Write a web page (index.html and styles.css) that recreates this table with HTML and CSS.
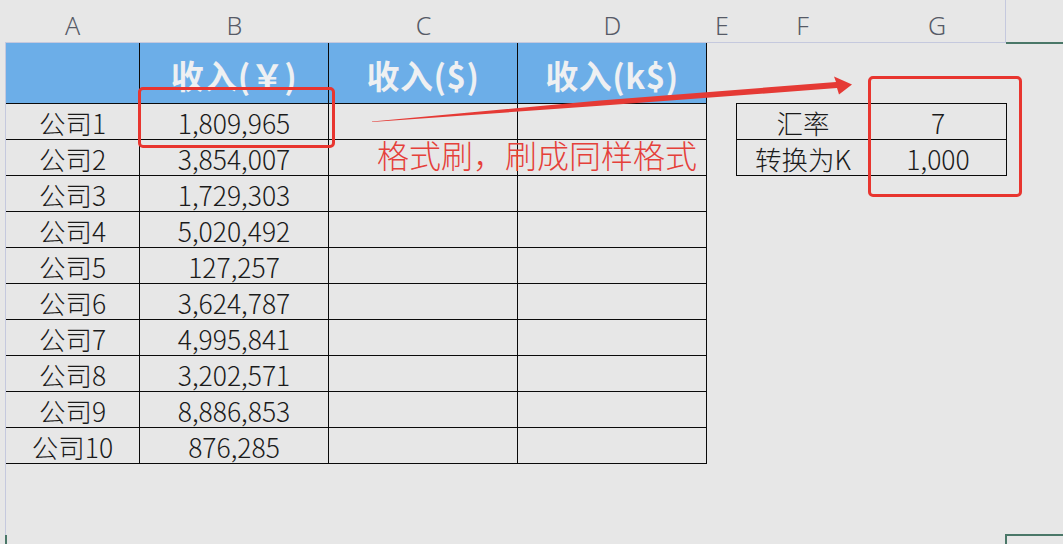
FILE: index.html
```html
<!DOCTYPE html>
<html lang="zh">
<head>
<meta charset="utf-8">
<title>收入表</title>
<link rel="stylesheet" href="styles.css">
</head>
<body>
<div class="sheet">
  <div class="letters">
    <div class="pad"></div>
    <div class="cols">
      <div class="lt w-a">A</div>
      <div class="lt w-b">B</div>
      <div class="lt w-b">C</div>
      <div class="lt w-b">D</div>
      <div class="lt w-e">E</div>
      <div class="lt w-f">F</div>
      <div class="lt w-g">G</div>
    </div>
    <div class="rest"></div>
  </div>
  <div class="area">
    <div class="main">
      <div class="c hd"></div>
      <div class="c hd">收入(￥)</div>
      <div class="c hd">收入($)</div>
      <div class="c hd">收入(k$)</div>

      <div class="c">公司1</div><div class="c">1,809,965</div><div class="c"></div><div class="c"></div>
      <div class="c">公司2</div><div class="c">3,854,007</div><div class="c"></div><div class="c"></div>
      <div class="c">公司3</div><div class="c">1,729,303</div><div class="c"></div><div class="c"></div>
      <div class="c">公司4</div><div class="c">5,020,492</div><div class="c"></div><div class="c"></div>
      <div class="c">公司5</div><div class="c">127,257</div><div class="c"></div><div class="c"></div>
      <div class="c">公司6</div><div class="c">3,624,787</div><div class="c"></div><div class="c"></div>
      <div class="c">公司7</div><div class="c">4,995,841</div><div class="c"></div><div class="c"></div>
      <div class="c">公司8</div><div class="c">3,202,571</div><div class="c"></div><div class="c"></div>
      <div class="c">公司9</div><div class="c">8,886,853</div><div class="c"></div><div class="c"></div>
      <div class="c">公司10</div><div class="c">876,285</div><div class="c"></div><div class="c"></div>
    </div>
    <div class="side">
      <div class="c">汇率</div><div class="c">7</div>
      <div class="c">转换为K</div><div class="c">1,000</div>
    </div>
  </div>

  <div class="box box1"></div>
  <div class="box box2"></div>
  <div class="note">格式刷，刷成同样格式</div>
  <svg class="arrow" width="1063" height="544" viewBox="0 0 1063 544">
    <polygon fill="#e53a35" points="372,121.4 600,100.6 836,82 834,76.5 852,84.5 839,94.5 837,88 600,105.8 372,121.9"/>
  </svg>
  <div class="mark mark-br"></div>
  <div class="mark mark-bl"></div>
</div>
</body>
</html>
```

FILE: styles.css
```css
html, body {
  margin: 0;
  padding: 0;
  background: #e7e7e7;
}
.sheet {
  position: relative;
  width: 1063px;
  height: 544px;
  overflow: hidden;
  font-family: "Noto Sans CJK SC", "Noto Sans", sans-serif;
  color: #1b1b1b;
}
.letters {
  display: flex;
  height: 43px;
}
.pad {
  width: 5px;
}
.cols {
  display: flex;
  border-bottom: 1px solid #c5c9de;
}
.lt {
  box-sizing: border-box;
  text-align: center;
  font-family: "Noto Sans", "Liberation Sans", sans-serif;
  font-weight: 300;
  font-size: 25px;
  line-height: 30px;
  padding-top: 10px;
  color: #565a66;
}
.w-a { width: 135px; }
.w-b { width: 189px; }
.w-e { width: 29px; text-align: left; padding-left: 8px; }
.w-f { width: 133px; }
.w-g { width: 137px; border-right: 1px solid #c5c9de; }
.rest {
  flex: 1;
  border-bottom: 2px solid #4a7768;
  margin-bottom: -1px;
}
.area {
  display: flex;
  align-items: flex-start;
  margin-left: 5px;
  height: 501px;
  border-left: 1px solid #c5c9de;
}
.main {
  display: grid;
  grid-template-columns: 134px 189px 189px 189px;
  grid-template-rows: 61px repeat(10, 36px);
}
.c {
  box-sizing: border-box;
  border-right: 1px solid #0a0a0a;
  border-bottom: 1px solid #0a0a0a;
  display: flex;
  align-items: center;
  justify-content: center;
  font-size: 26.5px;
  font-weight: 300;
  padding-top: 2px;
}
.hd {
  background: #6caee8;
  color: #eef0f2;
  font-weight: 700;
  font-size: 33px;
  letter-spacing: 0.5px;
  padding-top: 4px;
}
.side {
  display: grid;
  grid-template-columns: 133px 137px;
  grid-template-rows: 36px 36px;
  margin-left: 29px;
  margin-top: 60px;
  border-top: 1px solid #0a0a0a;
  border-left: 1px solid #0a0a0a;
}
.box {
  position: absolute;
  box-sizing: border-box;
  border: 3.5px solid #e8352f;
  border-radius: 5px;
}
.box1 {
  left: 138px;
  top: 87px;
  width: 197px;
  height: 61px;
}
.box2 {
  left: 868px;
  top: 76px;
  width: 154px;
  height: 121px;
}
.note {
  position: absolute;
  left: 377px;
  top: 136px;
  font-size: 32px;
  font-weight: 300;
  line-height: 36px;
  color: #e5403a;
  white-space: nowrap;
}
.arrow {
  position: absolute;
  left: 0;
  top: 0;
}
.mark {
  position: absolute;
  border-color: #4a7768;
  border-style: solid;
}
.mark-br {
  left: 1005px;
  top: 534px;
  width: 60px;
  height: 12px;
  border-width: 2px 0 0 2px;
}
.mark-bl {
  left: 5px;
  top: 535px;
  width: 0;
  height: 9px;
  border-width: 0 0 0 2px;
}
```
